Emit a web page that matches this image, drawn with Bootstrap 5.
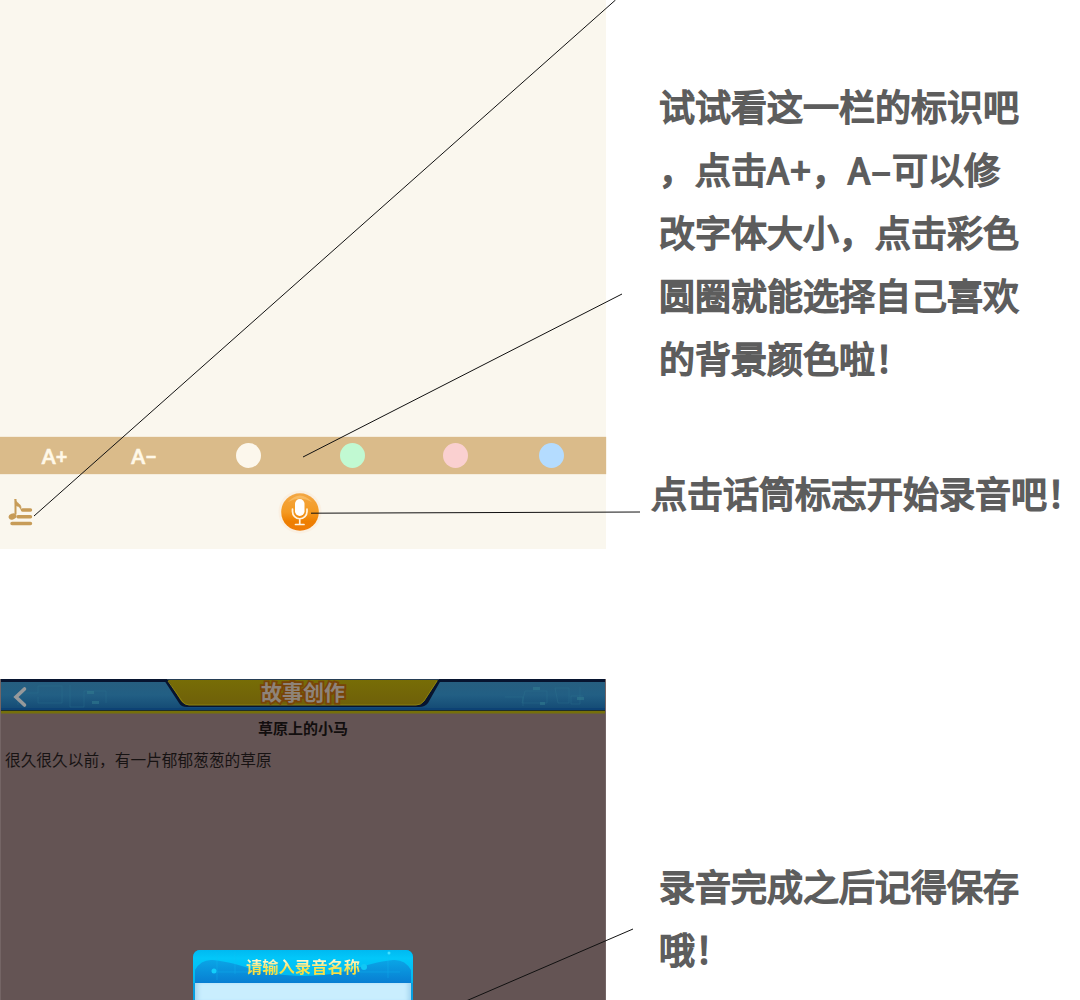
<!DOCTYPE html>
<html lang="zh-CN">
<head>
<meta charset="utf-8">
<meta name="viewport" content="width=device-width, initial-scale=1">
<title>故事创作 - 使用说明</title>
<link href="https://cdn.jsdelivr.net/npm/bootstrap@5.3.0/dist/css/bootstrap.min.css" rel="stylesheet">
<style>
body{font-family:"Noto Sans CJK SC",sans-serif;background:#fff;overflow:hidden}
.guide{width:1080px;height:1000px}
.shots{width:606px}
.editor{height:549px;background:#faf7ee;margin-bottom:130px}
.tools{height:37px;background:#dabb8a;box-shadow:0 0 1px #dabb8a}
.letter{font-family:Lato,sans-serif;font-size:20px;font-weight:700;color:#fff8e8;line-height:1;-webkit-text-stroke:.5px #fff8e8}
.letter-plus{width:109px}
.letter-minus{width:70px}
.dots{padding-left:57px}
.dot{width:25px;height:25px}
.dot-cream{background:#fcf7ec;margin-right:79px}.dot-green{background:#c1f9d2;margin-right:78px}.dot-pink{background:#fad0d0;margin-right:71px}.dot-blue{background:#b4dcff}
.foot{height:75px}
.foot .list-icon{margin-left:8px;margin-top:3px}
.foot .mic-icon{margin-left:244px;margin-top:1px}
.story{background:#645454;border-left:1px solid #746565;border-right:1px solid #746565}
.story-head{height:35px}
.story-head h1{font-size:21px;line-height:25px;font-weight:700;color:#8e8379;-webkit-text-stroke:3.5px #784408;paint-order:stroke fill}
.story-name{font-size:15px;line-height:20px;font-weight:700;color:#120e0e;padding-top:4px}
.story-text{font-size:15.7px;line-height:24px;color:#171313;padding:10px 0 0 4px}
.prompt-box{width:220px;height:50px;border-radius:7px 7px 0 0;background:#079fe0;margin-top:178px}
.prompt-title{height:33px}
.prompt-title span{font-size:16.3px;line-height:33px;font-weight:700;background:linear-gradient(#fff6c6 28%,#f8de45 65%);-webkit-background-clip:text;background-clip:text;color:transparent}
.prompt-body{height:18px;margin:0 2px;background:#c9eefe;box-shadow:inset 5px 0 4px -2px #a5d6f0,inset -5px 0 4px -2px #a5d6f0}
.notes{color:#5d5d5d;font-size:36px;line-height:63px;font-weight:400;-webkit-text-stroke:1.8px #5d5d5d;white-space:nowrap;padding-top:74px}
.notes p{margin:0 0 0 53px}
.notes .note-mic{margin:72px 0 330px 45px}
.ab{letter-spacing:1.6px}
.ab-dash{letter-spacing:1.4px}
.tight-end{letter-spacing:-14px}
</style>
<script src="https://cdn.jsdelivr.net/npm/bootstrap@5.3.0/dist/js/bootstrap.bundle.min.js"></script>
</head>
<body>
<main class="guide d-flex position-relative overflow-hidden">
  <div class="shots d-flex flex-column flex-shrink-0">
    <section class="editor d-flex flex-column justify-content-end">
      <div class="tools d-flex align-items-center flex-shrink-0">
        <span class="letter letter-plus text-center">A+</span>
        <span class="letter letter-minus text-center">A−</span>
        <div class="dots d-flex flex-fill">
          <span class="dot dot-cream rounded-circle"></span>
          <span class="dot dot-green rounded-circle"></span>
          <span class="dot dot-pink rounded-circle"></span>
          <span class="dot dot-blue rounded-circle"></span>
        </div>
      </div>
      <div class="foot d-flex align-items-center flex-shrink-0">
        <svg class="list-icon" width="26" height="28" viewBox="0 0 26 28">
          <g stroke="#c79c58" stroke-width="3.400" stroke-linecap="round" fill="none"><path d="M14.500 11h8M10 17.700h12.500M4 24.500h18.500"/></g>
          <path d="M7.500 0v15.500" stroke="#c79c58" stroke-width="2"/><path d="M7 0c1 4 7.500 5 5.800 10.500C12 7.500 9 7 7.500 6.500z" fill="#c79c58" stroke="#c79c58" stroke-width=".6"/>
          <ellipse cx="4.500" cy="17.500" rx="4" ry="2.900" transform="rotate(-22 4.500 17.500)" fill="#c79c58"/>
        </svg>
        <svg class="mic-icon" width="44" height="44" viewBox="0 0 44 44">
          <defs><linearGradient id="orange" x2="0" y2="1"><stop stop-color="#f3a744"/><stop offset=".5" stop-color="#f49a22"/><stop offset=".75" stop-color="#ee7f00"/><stop offset="1" stop-color="#ef7c08"/></linearGradient></defs>
          <circle cx="22" cy="22" r="21.500" fill="#faf0e2"/><circle cx="22" cy="22" r="18.800" fill="url(#orange)"/>
          <path d="M10 12Q22-1 34 12Q22 5 10 12" fill="#ffd48c" opacity=".45"/>
          <rect x="17" y="9" width="9.500" height="17" rx="4.750" fill="#fff"/>
          <path d="M14.500 19v2.500a7.250 7.250 0 0 0 14.500 0V19M21.750 29v5M17.500 34.500h8.500" fill="none" stroke="#fff4e2" stroke-width="1.700" stroke-linecap="round"/>
        </svg>
      </div>
    </section>
    <section class="story flex-fill d-flex flex-column">
      <header class="story-head position-relative flex-shrink-0">
        <svg class="position-absolute top-0 start-0" width="604" height="35" viewBox="1 0 604 35">
          <defs>
            <linearGradient id="sea" x2="0" y2="1"><stop stop-color="#275e7e"/><stop offset=".5" stop-color="#225f84"/><stop offset="1" stop-color="#124873"/></linearGradient>
            <linearGradient id="gold" x2="0" y2="1"><stop stop-color="#776d06"/><stop offset="1" stop-color="#6f6009"/></linearGradient>
          </defs>
          <path fill="url(#sea)" d="M0 0h606v32H0z"/><path fill="#07142f" d="M0 0h606v3H0z"/><path fill="#273e55" d="M167 0h272v1H167z"/>
          <path d="M164 1l15 23q2 4 8 4h232q6 0 9-4l13-23z" fill="#07142f"/>
          <path d="M168 1h270l-14 21q-3 4-8 4H189q-5 0-8-4z" fill="url(#gold)"/>
          <path d="M168 2l14 20q3 4 7 4h227q5 0 8-4l13-20" fill="none" stroke="#8d820f"/>
          <path d="M179 28.500h248" stroke="#124a7a"/>
          <path d="M0 30h606" stroke="#0d4274" stroke-width="2"/><path d="M0 31.500h606" stroke="#202f28"/>
          <path d="M0 33.200h606" stroke="#76700a" stroke-width="2.400"/>
          <path d="M18 26V14h20V7h24v17H38v-6M70 6v22h14V12h22v12M525 12h22v12h-25zM555 9h14v15h-11zM580 8v17h-9v-8h12M505 18h18v9" stroke="#327991" fill="none" opacity=".3"/>
          <path d="M87 12h7v3h-7zM92 22h7v3h-7zM533 8h7v3h-7zM540 23h5v3h-5zM577 18h7v3h-7z" fill="#347f92" opacity=".5"/>
          <path d="M24.500 10L16 18l8.500 8" fill="none" stroke="#96999b" stroke-width="3.600" stroke-linecap="round"/>
        </svg>
        <h1 class="position-relative text-center mb-0">故事创作</h1>
      </header>
      <div class="story-name text-center">草原上的小马</div>
      <div class="story-text">很久很久以前，有一片郁郁葱葱的草原</div>
      <div class="prompt-box mx-auto overflow-hidden flex-shrink-0">
        <div class="prompt-title position-relative text-center">
          <svg class="position-absolute top-0 start-0" width="220" height="33" viewBox="0 0 220 33">
            <defs><linearGradient id="cyan" x2="0" y2="1"><stop stop-color="#00b9f1"/><stop offset=".25" stop-color="#02c7f9"/><stop offset="1" stop-color="#02b4ee"/></linearGradient><linearGradient id="wave" x2="0" y2="1"><stop stop-color="#0aa5e6"/><stop offset="1" stop-color="#087ed2"/></linearGradient></defs>
            <path fill="url(#cyan)" d="M0 0h220v33H0z"/>
            <path fill="url(#wave)" d="M2 33V20Q8 9 20 10C50 13 67 26 110 26S170 13 200 10Q212 9 218 20v13z"/>
            <path d="M24 2v28M42 2v22M24 22h42M195 1v27M162 9v18M162 22h45" stroke="#1bc4f5" opacity=".3"/>
            <circle cx="21" cy="21" r="2.500" fill="#12cdfa"/><circle cx="171" cy="17" r="3" fill="#10c8f6"/><circle cx="196" cy="3" r="1.500" fill="#43e0ff"/>
          </svg>
          <span class="position-relative">请输入录音名称</span>
        </div>
        <div class="prompt-body"></div>
      </div>
    </section>
  </div>
  <div class="notes">
    <p>试试看这一栏的标识吧<br>，点击<span class="ab">A+</span>，<span class="ab-dash">A–</span>可以修<br>改字体大小，点击彩色<br>圆圈就能选择自己喜欢<br>的背景颜色啦！</p>
    <p class="note-mic">点击话筒标志开始录音吧<span class="tight-end">！</span></p>
    <p>录音完成之后记得保存<br>哦！</p>
  </div>
  <svg class="position-absolute top-0 start-0" width="1080" height="1000" viewBox="0 0 1080 1000">
    <path d="M615.500 0L34 516M622 294L303 457M311 513.200L640 512M633 929L466 1001" fill="none" stroke="#111" stroke-width="1"/>
  </svg>
</main>
</body>
</html>
